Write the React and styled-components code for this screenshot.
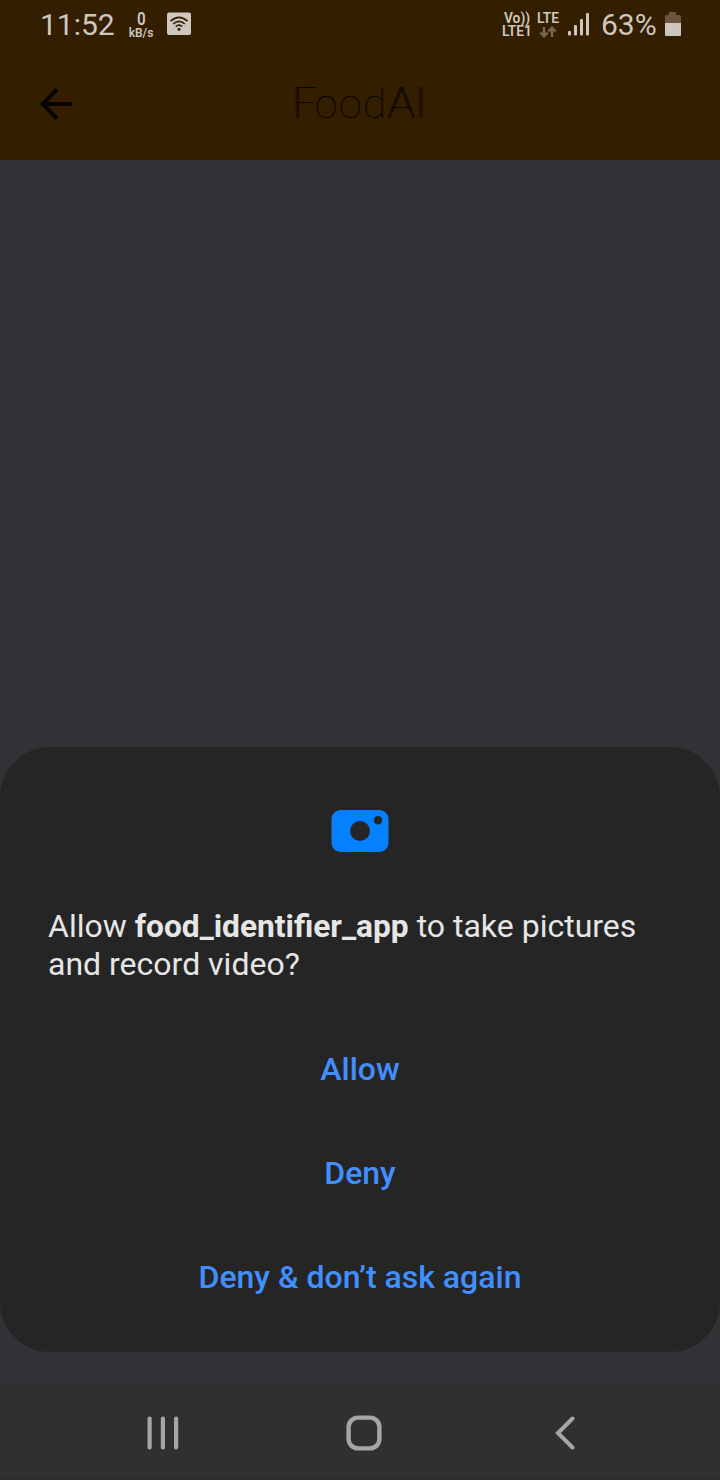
import React from 'react';
import styled, { createGlobalStyle } from 'styled-components';

const GlobalStyle = createGlobalStyle`
  * { box-sizing: border-box; }
  body { margin: 0; background: #333135; font-family: Roboto, "Liberation Sans", sans-serif; }
`;

const Screen = styled.div`
  width: 720px;
  height: 1480px;
  display: flex;
  flex-direction: column;
  background: #333135;
  overflow: hidden;
`;

const Header = styled.header`
  height: 160px;
  background: #331e00;
`;

const StatusBar = styled.div`
  height: 48px;
  padding: 0 38px 0 40px;
  display: flex;
  justify-content: space-between;
  align-items: center;
  color: #cdc7bf;
`;

const StatusGroup = styled.div`
  display: flex;
  align-items: center;
`;

const StatusText = styled.span`
  font-size: 30px;
  line-height: 48px;
  width: ${(p) => p.$width}px;
  margin-top: 1px;
  white-space: nowrap;
`;

const Stack = styled.div`
  display: flex;
  flex-direction: column;
  align-items: center;
  width: ${(p) => p.$width}px;
  margin-left: ${(p) => p.$gap || 0}px;
  padding-top: 2px;
  font-size: 13.8px;
  font-weight: 600;
  line-height: 13px;
  white-space: nowrap;
`;

const Rate = styled.span`
  font-size: 19px;
  line-height: 15px;
  transform: scaleX(0.8);
`;

const Unit = styled.span`
  margin-top: 1px;
  font-size: 12px;
  line-height: 13px;
  font-weight: 600;
`;

const Icon = styled.svg`
  display: block;
  flex: none;
  margin-left: ${(p) => p.$gap || 0}px;
`;

const AppBar = styled.div`
  height: 112px;
  padding: 0 40px;
  display: grid;
  grid-template-columns: 40px 1fr 40px;
  align-items: center;
`;

const Title = styled.h1`
  margin: 0;
  padding: 0 4px 4px 0;
  text-align: center;
  font-family: Lato, sans-serif;
  font-size: 43px;
  font-weight: 100;
  letter-spacing: 0.6px;
  line-height: 52px;
  color: #080500;
  text-shadow: 0.5px 0 #080500, 1px 0 #080500;
`;

const Stem = styled.span`
  text-shadow: 1px 0 #080500, 2px 0 #080500, 2.6px 0 #080500;
`;

const Body = styled.main`
  height: 1224px;
  display: flex;
  flex-direction: column;
  justify-content: flex-end;
  padding-bottom: 32px;
`;

const Dialog = styled.section`
  height: 605px;
  padding: 63px 48px 0;
  border-radius: 50px;
  background: #252525;
  display: flex;
  flex-direction: column;
  align-items: center;
`;

const Message = styled.p`
  width: 100%;
  margin: 55px 0 0;
  font-size: 32px;
  line-height: 38px;
  color: #e6e6e6;
`;

const AppName = styled.b`
  font-weight: 700;
  font-size: 31.7px;
  line-height: 1;
`;

const Actions = styled.div`
  display: flex;
  flex-direction: column;
  align-items: center;
  margin-top: 34px;
`;

const Action = styled.button`
  height: 104px;
  padding: 0;
  border: 0;
  background: none;
  font-family: inherit;
  font-size: 32px;
  font-weight: 500;
  color: #418fff;
`;

const NavBar = styled.nav`
  height: 96px;
  padding: 2px 144px 0 146px;
  display: grid;
  grid-template-columns: 200px 1fr auto;
  align-items: center;
  background: #303030;
  border-bottom: 1px solid #2b2a2b;
`;

export default function App() {
  return (
    <Screen>
      <GlobalStyle />
      <Header>
        <StatusBar>
          <StatusGroup>
            <StatusText $width={87}>11:52</StatusText>
            <Stack $width={28}>
              <Rate>0</Rate>
              <Unit>kB/s</Unit>
            </Stack>
            <Icon $gap={12} width="24" height="24" viewBox="0 0 24 24">
              <rect width="24" height="22.5" y="0.5" rx="2" fill="#cdc7bf" />
              <g fill="none" stroke="#331e00" strokeWidth="1.7">
                <path d="M3.5 9.2Q12 1.5 20.5 9.2" />
                <path d="M6.2 12Q12 6.6 17.8 12" />
                <path d="M8.8 14.7Q12 11.6 15.2 14.7" />
              </g>
              <circle cx="12" cy="17.3" r="1.5" fill="#331e00" />
            </Icon>
          </StatusGroup>
          <StatusGroup>
            <Stack $width={30}>
              <span>Vo))</span>
              <span>LTE1</span>
            </Stack>
            <Stack $width={24} $gap={4}>
              <span>LTE</span>
              <Icon width="18" height="13" viewBox="0 0 18 13" fill="none" stroke="#776850" strokeWidth="2.4">
                <path d="M5 2V11M1.3 7.5L5 11.2L8.7 7.5M13 12V3M9.3 6.5L13 2.8L16.7 6.5" />
              </Icon>
            </Stack>
            <Icon $gap={8} width="23" height="24" viewBox="0 0 23 24" fill="#cdc7bf">
              <rect x="0" y="19" width="3" height="4.5" rx="1" />
              <rect x="6" y="13" width="3" height="10.5" rx="1" />
              <rect x="12" y="7" width="3" height="16.5" rx="1" />
              <rect x="18" y="1" width="3" height="22.5" rx="1" />
            </Icon>
            <Stack $width={10} />
            <StatusText $width={64}>63%</StatusText>
            <Icon width="17" height="24" viewBox="0 0 17 24">
              <path d="M4 0H11V3H14.5Q16 3 16 4.5V11H0V4.5Q0 3 1.5 3H4Z" fill="#6a563c" />
              <path d="M0 11H16V23Q16 24 15 24H1Q0 24 0 23Z" fill="#cdc7bf" />
            </Icon>
          </StatusGroup>
        </StatusBar>
        <AppBar>
          <Icon width="32" height="32" viewBox="0 0 32 32" fill="none" stroke="#080500" strokeWidth="4">
            <path d="M32 16H3M17.2 1.4L2.6 16L17.2 30.6" />
          </Icon>
          <Title>
            <Stem>F</Stem>ood<Stem>AI</Stem>
          </Title>
        </AppBar>
      </Header>
      <Body>
        <Dialog>
          <Icon width="58" height="42" viewBox="0 0 58 42">
            <rect x="0.5" width="57" height="42" rx="9" fill="#0581ff" />
            <circle cx="29" cy="21" r="10" fill="#252525" />
            <circle cx="47" cy="10.2" r="4.2" fill="#252525" />
          </Icon>
          <Message>
            Allow <AppName>food_identifier_app</AppName> to take pictures and record video?
          </Message>
          <Actions>
            <Action>Allow</Action>
            <Action>Deny</Action>
            <Action>Deny &amp; don’t ask again</Action>
          </Actions>
        </Dialog>
      </Body>
      <NavBar>
        <Icon width="34" height="34" viewBox="0 0 34 34" fill="#a6a6a6">
          <rect x="1.5" y="0.5" width="4.2" height="33" rx="2" />
          <rect x="14.8" y="0.5" width="4.2" height="33" rx="2" />
          <rect x="28" y="0.5" width="4.2" height="33" rx="2" />
        </Icon>
        <Icon width="36" height="36" viewBox="0 0 36 36" fill="none" stroke="#a6a6a6" strokeWidth="4.4">
          <rect x="2.6" y="2.6" width="30.8" height="30.8" rx="9.5" />
        </Icon>
        <Icon width="21" height="34" viewBox="0 0 21 34" fill="none" stroke="#a6a6a6" strokeWidth="4" strokeLinecap="round">
          <path d="M17.5 2.5L3 17L17.5 31.5" />
        </Icon>
      </NavBar>
    </Screen>
  );
}
